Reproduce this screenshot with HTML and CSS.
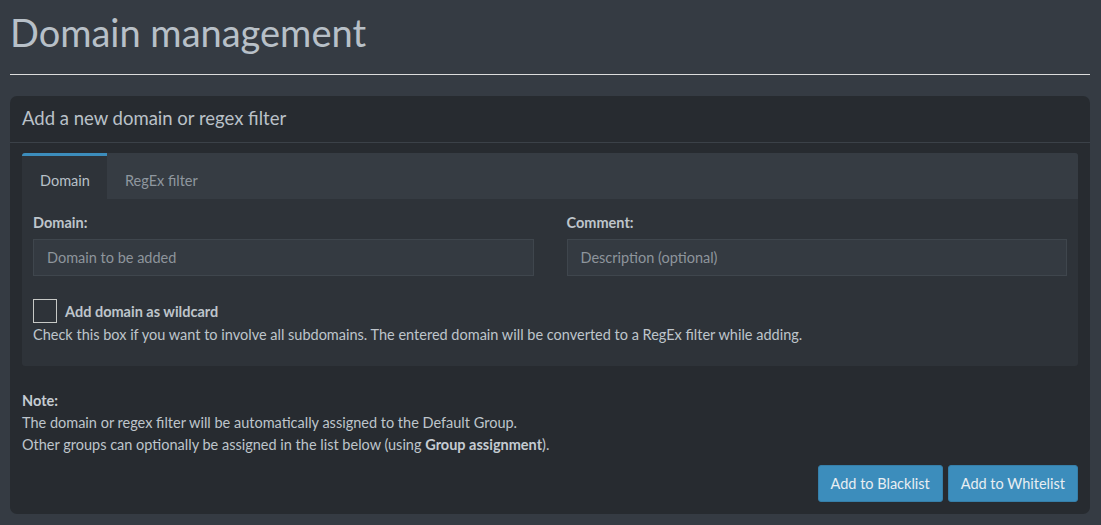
FILE: index.html
```html
<!DOCTYPE html>
<html>
<head>
<meta charset="utf-8">
<link rel="stylesheet" href="styles.css">
</head>
<body>
<div class="page">
  <h1 class="title">Domain management</h1>
  <hr class="rule">
  <div class="box">
    <div class="box-header">Add a new domain or regex filter</div>
    <div class="box-body">
      <div class="tabs">
        <div class="tab-bar">
          <div class="tab active">Domain</div>
          <div class="tab">RegEx filter</div>
        </div>
        <div class="tab-content">
          <div class="fields">
            <div class="field">
              <label class="label">Domain:</label>
              <div class="input">Domain to be added</div>
            </div>
            <div class="field">
              <label class="label">Comment:</label>
              <div class="input">Description (optional)</div>
            </div>
          </div>
          <div class="check-row">
            <span class="checkbox"></span>
            <span class="check-label">Add domain as wildcard</span>
          </div>
          <p class="help">Check this box if you want to involve all subdomains. The entered domain will be converted to a RegEx filter while adding.</p>
        </div>
      </div>
      <div class="note">
        <strong>Note:</strong><br>
        The domain or regex filter will be automatically assigned to the Default Group.<br>
        Other groups can optionally be assigned in the list below (using <strong>Group assignment</strong>).
      </div>
      <div class="actions">
        <button class="btn">Add to Blacklist</button>
        <button class="btn">Add to Whitelist</button>
      </div>
    </div>
  </div>
</div>
</body>
</html>
```
FILE: styles.css
```css
html, body {
  margin: 0;
  padding: 0;
  background: #353b43;
  font-family: "Source Sans Pro", Lato, "Noto Sans", sans-serif;
  color: #bec5cb;
  font-size: 14.5px;
}
.page {
  padding: 0 11px 0 10px;
}
.title {
  margin: 0;
  padding-top: 9px;
  height: 56px;
  font-size: 38px;
  font-weight: 400;
  color: #b8c0c8;
  line-height: 46px;
}
.rule {
  margin: 9px 0 21px 0;
  border: 0;
  border-top: 1px solid #dcdcdc;
  height: 0;
}
.box {
  background: #272b30;
  border-radius: 7px;
  height: 418px;
}
.box-header {
  height: 47px;
  box-sizing: border-box;
  padding: 11px 12px 0 12px;
  font-size: 18.5px;
  border-bottom: 1px solid #3b4148;
  color: #bac1c8;
}
.box-body {
  padding: 10px 12px 0 12px;
}
.tabs {
  background: #2e3339;
  border-radius: 3px;
  overflow: hidden;
}
.tab-bar {
  display: flex;
  background: #363c43;
  height: 46px;
}
.tab {
  box-sizing: border-box;
  padding: 16px 18px 0 18px;
  color: #8f979f;
  border-top: 3px solid transparent;
  font-size: 14.5px;
}
.tab.active {
  background: #2e3339;
  border-top-color: #3c8dbc;
  color: #b8c0c8;
  width: 85px;
}
.tab-content {
  padding: 14px 11px 0 11px;
  height: 167px;
  box-sizing: border-box;
}
.fields {
  display: grid;
  grid-template-columns: 1fr 1fr;
  column-gap: 33px;
}
.field {
  display: flex;
  flex-direction: column;
}
.label {
  font-weight: 700;
  height: 26px;
  line-height: 20px;
  color: #bec5cb;
}
.input {
  height: 37px;
  box-sizing: border-box;
  border: 1px solid #3f464d;
  background: #343a41;
  padding: 9px 13px 0 13px;
  color: #8e959c;
}
.check-row {
  display: flex;
  align-items: center;
  margin-top: 23px;
  height: 24px;
}
.checkbox {
  width: 24px;
  height: 24px;
  box-sizing: border-box;
  border: 1px solid #c7c9c6;
  margin-right: 8px;
}
.check-label {
  font-weight: 700;
  color: #bec5cb;
}
.help {
  margin: 1px 0 0 0;
  line-height: 22px;
}
.note {
  margin-top: 24px;
  line-height: 22px;
}
.note strong {
  color: #c5ccd2;
}
.actions {
  display: flex;
  justify-content: flex-end;
  gap: 5px;
  margin-top: 9px;
}
.btn {
  font-family: inherit;
  font-size: 14.5px;
  background: #3c8dbc;
  color: #e8eef2;
  border: 1px solid #367fa9;
  border-radius: 3px;
  height: 37px;
  padding: 0 12px;
  white-space: nowrap;
}
```
